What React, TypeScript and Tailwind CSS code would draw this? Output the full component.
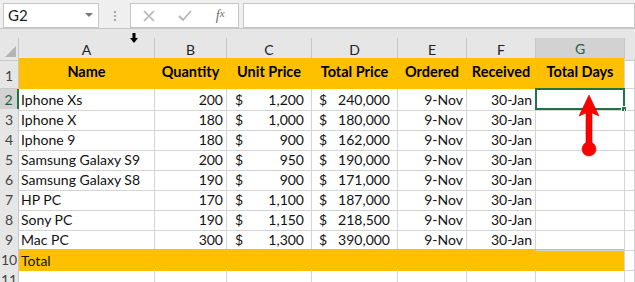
import React from 'react';

const ROWS = [
  ['Iphone Xs', '200', '1,200', '240,000'],
  ['Iphone X', '180', '1,000', '180,000'],
  ['Iphone 9', '180', '900', '162,000'],
  ['Samsung Galaxy S9', '200', '950', '190,000'],
  ['Samsung Galaxy S8', '190', '900', '171,000'],
  ['HP PC', '170', '1,100', '187,000'],
  ['Sony PC', '190', '1,150', '218,500'],
  ['Mac PC', '300', '1,300', '390,000'],
];

const HEADERS = ['Name', 'Quantity', 'Unit Price', 'Total Price', 'Ordered', 'Received', 'Total Days'];
const COLS = ['A', 'B', 'C', 'D', 'E', 'F', 'G'];

const GRID = 'grid grid-cols-[19px_136px_72px_85px_86px_69px_69px_89px_1fr]';
const cell = 'border-r border-b border-[#d4d4d4] flex items-center text-[14px] text-[#111] whitespace-nowrap overflow-hidden';
const rowHead = 'border-r border-b border-[#c8c8c8] bg-[#e6e6e6] flex items-center justify-center text-[14px] text-[#444]';

export default function App() {
  return (
    <div className="relative w-[635px] h-[282px] overflow-hidden bg-white font-['Lato','Liberation_Sans',sans-serif]">
      {/* formula bar */}
      <div className="h-[29px] bg-[#efefef] border-b border-[#c6c6c6] flex items-start pt-[3px] pl-[3px]">
        <div className="w-[96px] h-[25px] bg-white border border-[#c6c6c6] flex items-center justify-between px-[4px]">
          <span className="text-[15px] text-[#222]">G2</span>
          <svg width="8" height="5" viewBox="0 0 8 5" className="mr-[1px]"><polygon points="0,0 8,0 4,4" fill="#777" /></svg>
        </div>
        <div className="w-[31px] h-[25px] flex flex-col items-center justify-center gap-[2px]">
          <span className="w-[2px] h-[2px] bg-[#a8a8a8]" />
          <span className="w-[2px] h-[2px] bg-[#a8a8a8]" />
          <span className="w-[2px] h-[2px] bg-[#a8a8a8]" />
        </div>
        <div className="w-[109px] h-[25px] bg-white border border-[#c6c6c6] flex items-center">
          <div className="w-[36px] flex justify-center">
            <svg width="12" height="12" viewBox="0 0 12 12"><path d="M1 1 L11 11 M11 1 L1 11" stroke="#b4b4b4" strokeWidth="1.6" /></svg>
          </div>
          <div className="w-[36px] flex justify-center">
            <svg width="14" height="12" viewBox="0 0 14 12"><path d="M1 6 L5 10 L13 1" stroke="#b4b4b4" strokeWidth="1.8" fill="none" /></svg>
          </div>
          <div className="w-[36px] flex justify-center font-['Liberation_Serif',serif] italic text-[14px] text-[#6e6e6e]">
            f<span className="text-[11px]">x</span>
          </div>
        </div>
        <div className="ml-[4px] flex-1 h-[25px] bg-white border border-[#c6c6c6]" />
      </div>

      <div className="h-[9px] bg-[#e6e6e6]" />

      {/* column headers */}
      <div className={GRID + ' h-[20px]'}>
        <div className="bg-[#e6e6e6] border-r border-b border-[#c8c8c8] relative">
          <svg width="11" height="11" viewBox="0 0 11 11" className="absolute left-[5px] bottom-[3px]"><polygon points="11,0 11,11 0,11" fill="#b4b4b4" /></svg>
        </div>
        {COLS.map(c =>
          c === 'G' ? (
            <div key={c} className="bg-[#d2d2d2] border-r border-[#c8c8c8] border-b-2 border-b-[#217346] flex items-center justify-center text-[14px] text-[#1e5f3c]">{c}</div>
          ) : (
            <div key={c} className="bg-[#e6e6e6] border-r border-b border-[#c8c8c8] flex items-center justify-center text-[14px] text-[#222]">{c}</div>
          )
        )}
        <div className="bg-[#e6e6e6] border-b border-[#c8c8c8]" />
      </div>

      {/* row 1 headers */}
      <div className={GRID + ' h-[31px]'}>
        <div className={rowHead + ' !items-end pb-[2px]'}>1</div>
        {HEADERS.map((h, i) => (
          <div key={h} className={'bg-[#ffc000] border-b border-[#ffc000] flex items-end justify-center pb-[5px] text-[14.5px] font-bold text-black whitespace-nowrap ' + (i === 6 ? 'border-r border-r-[#d4d4d4]' : 'border-r border-r-[#ffc000]')}>{h}</div>
        ))}
        <div className={cell} />
      </div>

      {/* data rows */}
      {ROWS.map((r, i) => (
        <div key={i} className={GRID + ' h-[20px]'}>
          {i === 0 ? (
            <div className="bg-[#d2d2d2] border-b border-[#c8c8c8] border-r-2 border-r-[#217346] flex items-center justify-center text-[14px] text-[#1e5f3c]">2</div>
          ) : (
            <div className={rowHead}>{i + 2}</div>
          )}
          <div className={cell + ' pl-[2px]'}>{r[0]}</div>
          <div className={cell + ' justify-end pr-[3px]'}>{r[1]}</div>
          <div className={cell + ' justify-between pl-[8px] pr-[7px]'}><span>$</span><span>{r[2]}</span></div>
          <div className={cell + ' justify-between pl-[7px] pr-[7px]'}><span>$</span><span>{r[3]}</span></div>
          <div className={cell + ' justify-end pr-[3px]'}>9-Nov</div>
          <div className={cell + ' justify-end pr-[3px]'}>30-Jan</div>
          <div className={cell + ' relative !overflow-visible'}>
            {i === 0 && (
              <div className="absolute -left-[1px] -top-[1px] w-[90px] h-[22px] border-2 border-[#217346]">
                <div className="absolute -right-[4px] -bottom-[4px] w-[6px] h-[6px] bg-[#217346] border border-white" />
              </div>
            )}
          </div>
          <div className={cell} />
        </div>
      ))}

      {/* total row */}
      <div className={GRID + ' h-[20px]'}>
        <div className={rowHead}>10</div>
        <div className="col-span-7 bg-[#ffc000] border-r border-[#d4d4d4] flex items-center pl-[2px] text-[14px] text-[#111]">Total</div>
        <div className={cell} />
      </div>

      <div className={GRID + ' h-[20px]'}>
        <div className={rowHead + ' !items-start'}>11</div>
        {COLS.map(c => <div key={c} className={cell} />)}
        <div className={cell} />
      </div>

      {/* mouse cursor */}
      <svg width="8" height="11" viewBox="0 0 8 11" className="absolute left-[130px] top-[33px]">
        <rect x="2.5" y="0" width="3" height="6" fill="#000" />
        <polygon points="0,5 8,5 4,10" fill="#000" />
      </svg>

      {/* red annotation arrow */}
      <svg width="26" height="66" viewBox="0 0 26 66" className="absolute left-[576px] top-[93px]">
        <polygon points="13,2 23,23 16,20 16,54 10,54 10,20 3,23" fill="#ff0000" stroke="#d00000" strokeWidth="0.6" />
        <circle cx="13" cy="56" r="7" fill="#ff0000" stroke="#d00000" strokeWidth="0.6" />
      </svg>
    </div>
  );
}
